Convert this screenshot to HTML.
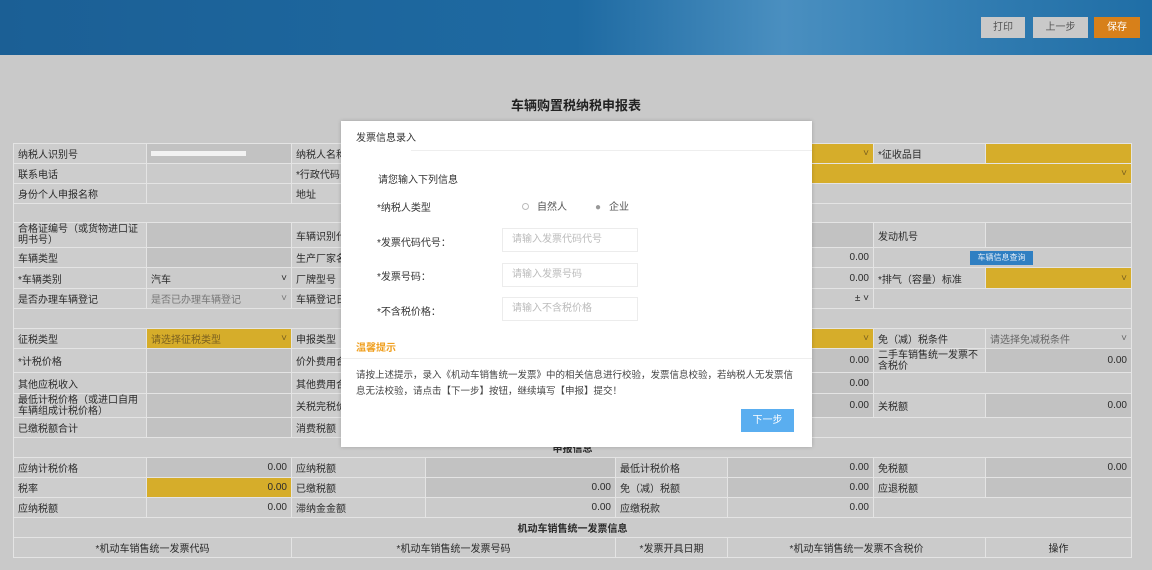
<!DOCTYPE html>
<html><head><meta charset="utf-8"><style>
*{margin:0;padding:0;box-sizing:border-box}
body{width:1152px;height:570px;overflow:hidden;background:#c9c9c9;font-family:"Liberation Sans","Noto Sans CJK SC",sans-serif;font-size:10px;color:#2a2a2a;position:relative}
.hd{position:absolute;left:0;top:0;width:1152px;height:55px;background:linear-gradient(90deg,#1b5f95 0%,#1e6aa2 50%,#4a8fc0 68%,#3a84b8 78%,#2b77ad 90%,#1f6ea6 100%)}
.b{position:absolute;top:17px;height:21px;font-size:10px;text-align:center;line-height:21px}
.c{position:absolute;border:1px solid #e4e4e4;background:#cfcfcf;padding:0 4px;white-space:nowrap;overflow:hidden;display:flex;align-items:center}
.v{background:#c2c2c2;justify-content:flex-end}
.y{background:#d6ad2a;justify-content:flex-end}
.l{background:#cdcdcd}
.e{background:#cbcbcb}
.ctr{justify-content:center}
.m{position:absolute;left:341px;top:121px;width:471px;height:326px;background:#fff;box-shadow:0 0 4px rgba(0,0,0,.2)}
.m div{position:absolute;white-space:nowrap}
.in{border:1px solid #ececec;width:136px;height:24px;color:#bbb;padding-left:9px;line-height:22px}
</style></head><body>
<div class="hd"></div>
<div class="b" style="left:981px;width:44px;background:#c9c9c9;color:#555">打印</div>
<div class="b" style="left:1033px;width:55px;background:#c9c9c9;color:#555">上一步</div>
<div class="b" style="left:1094px;width:46px;background:#d7801a;color:#fff">保存</div>
<div style="position:absolute;left:0;top:95px;width:1152px;text-align:center;font-size:13px;font-weight:bold;color:#222">车辆购置税纳税申报表</div>

<div class="c l" style="left:13px;top:143px;width:134px;height:21px">纳税人识别号</div>
<div class="c v" style="left:146px;top:143px;width:146px;height:21px;justify-content:flex-start"><span style="display:block;width:95px;height:5px;background:#f2f2f2"></span></div>
<div class="c l" style="left:13px;top:163px;width:134px;height:21px">联系电话</div>
<div class="c e" style="left:146px;top:163px;width:146px;height:21px"></div>
<div class="c l" style="left:13px;top:183px;width:134px;height:21px">身份个人申报名称</div>
<div class="c e" style="left:146px;top:183px;width:146px;height:21px"></div>
<div class="c e" style="left:13px;top:203px;width:1119px;height:20px"></div>
<div class="c l" style="left:13px;top:222px;width:134px;height:26px;white-space:normal;line-height:11px">合格证编号（或货物进口证明书号）</div>
<div class="c v" style="left:146px;top:222px;width:146px;height:26px"></div>
<div class="c l" style="left:13px;top:247px;width:134px;height:21px">车辆类型</div>
<div class="c v" style="left:146px;top:247px;width:146px;height:21px"></div>
<div class="c l" style="left:13px;top:267px;width:134px;height:22px">*车辆类别</div>
<div class="c e" style="left:146px;top:267px;width:146px;height:22px;justify-content:space-between"><span>汽车</span><span>˅</span></div>
<div class="c l" style="left:13px;top:288px;width:134px;height:21px">是否办理车辆登记</div>
<div class="c e" style="left:146px;top:288px;width:146px;height:21px;justify-content:space-between;color:#777"><span>是否已办理车辆登记</span><span>˅</span></div>
<div class="c e" style="left:13px;top:308px;width:1119px;height:21px"></div>
<div class="c l" style="left:13px;top:328px;width:134px;height:21px">征税类型</div>
<div class="c y" style="left:146px;top:328px;width:146px;height:21px;justify-content:space-between;color:#7a6020"><span>请选择征税类型</span><span>˅</span></div>
<div class="c l" style="left:13px;top:348px;width:134px;height:25px">*计税价格</div>
<div class="c v" style="left:146px;top:348px;width:146px;height:25px"></div>
<div class="c l" style="left:13px;top:372px;width:134px;height:22px">其他应税收入</div>
<div class="c v" style="left:146px;top:372px;width:146px;height:22px"></div>
<div class="c l" style="left:13px;top:393px;width:134px;height:25px;white-space:normal;line-height:11px">最低计税价格（或进口自用车辆组成计税价格）</div>
<div class="c v" style="left:146px;top:393px;width:146px;height:25px"></div>
<div class="c l" style="left:13px;top:417px;width:134px;height:21px">已缴税额合计</div>
<div class="c v" style="left:146px;top:417px;width:146px;height:21px"></div>
<div class="c l" style="left:291px;top:143px;width:135px;height:21px">纳税人名称</div>
<div class="c l" style="left:291px;top:163px;width:135px;height:21px">*行政代码</div>
<div class="c l" style="left:291px;top:183px;width:135px;height:21px">地址</div>
<div class="c l" style="left:291px;top:222px;width:135px;height:26px">车辆识别代号</div>
<div class="c l" style="left:291px;top:247px;width:135px;height:21px">生产厂家名称</div>
<div class="c l" style="left:291px;top:267px;width:135px;height:22px">厂牌型号</div>
<div class="c l" style="left:291px;top:288px;width:135px;height:21px">车辆登记日期</div>
<div class="c l" style="left:291px;top:328px;width:135px;height:21px">申报类型</div>
<div class="c l" style="left:291px;top:348px;width:135px;height:25px">价外费用合计</div>
<div class="c l" style="left:291px;top:372px;width:135px;height:22px">其他费用合计</div>
<div class="c l" style="left:291px;top:393px;width:135px;height:25px">关税完税价格</div>
<div class="c l" style="left:291px;top:417px;width:135px;height:21px">消费税额</div>

<div class="c y" style="left:727px;top:143px;width:147px;height:21px;color:#7a6020">˅</div>
<div class="c l" style="left:873px;top:143px;width:113px;height:21px">*征收品目</div>
<div class="c y" style="left:985px;top:143px;width:147px;height:21px"></div>
<div class="c y" style="left:727px;top:163px;width:405px;height:21px;color:#7a6020">˅</div>
<div class="c e" style="left:727px;top:183px;width:405px;height:21px"></div>
<div class="c v" style="left:727px;top:222px;width:147px;height:26px"></div>
<div class="c l" style="left:873px;top:222px;width:113px;height:26px">发动机号</div>
<div class="c v" style="left:985px;top:222px;width:147px;height:26px"></div>
<div class="c e" style="left:727px;top:247px;width:147px;height:21px;justify-content:flex-end">0.00</div>
<div class="c e" style="left:873px;top:247px;width:259px;height:21px"></div>
<div style="position:absolute;left:970px;top:251px;width:63px;height:14px;background:#2f7fc2;color:#dfeaf5;font-size:8px;text-align:center;line-height:14px">车辆信息查询</div>
<div class="c e" style="left:727px;top:267px;width:147px;height:22px;justify-content:flex-end">0.00</div>
<div class="c l" style="left:873px;top:267px;width:113px;height:22px">*排气（容量）标准</div>
<div class="c y" style="left:985px;top:267px;width:147px;height:22px;color:#7a6020">˅</div>
<div class="c e" style="left:727px;top:288px;width:147px;height:21px;justify-content:flex-end">± ˅</div>
<div class="c e" style="left:873px;top:288px;width:259px;height:21px"></div>
<div class="c y" style="left:727px;top:328px;width:147px;height:21px;color:#7a6020">˅</div>
<div class="c l" style="left:873px;top:328px;width:113px;height:21px">免（减）税条件</div>
<div class="c e" style="left:985px;top:328px;width:147px;height:21px;justify-content:space-between;color:#666"><span>请选择免减税条件</span><span>˅</span></div>
<div class="c v" style="left:727px;top:348px;width:147px;height:25px">0.00</div>
<div class="c l" style="left:873px;top:348px;width:113px;height:25px;white-space:normal;line-height:11px">二手车销售统一发票不含税价</div>
<div class="c v" style="left:985px;top:348px;width:147px;height:25px">0.00</div>
<div class="c v" style="left:727px;top:372px;width:147px;height:22px">0.00</div>
<div class="c e" style="left:873px;top:372px;width:259px;height:22px"></div>
<div class="c v" style="left:727px;top:393px;width:147px;height:25px">0.00</div>
<div class="c l" style="left:873px;top:393px;width:113px;height:25px">关税额</div>
<div class="c v" style="left:985px;top:393px;width:147px;height:25px">0.00</div>
<div class="c e" style="left:727px;top:417px;width:405px;height:21px"></div>

<div class="c e ctr" style="left:13px;top:437px;width:1119px;height:21px;font-weight:bold">申报信息</div>
<div class="c l" style="left:13px;top:457px;width:134px;height:21px">应纳计税价格</div>
<div class="c v" style="left:146px;top:457px;width:146px;height:21px">0.00</div>
<div class="c l" style="left:291px;top:457px;width:135px;height:21px">应纳税额</div>
<div class="c v" style="left:425px;top:457px;width:191px;height:21px"></div>
<div class="c l" style="left:615px;top:457px;width:113px;height:21px">最低计税价格</div>
<div class="c v" style="left:727px;top:457px;width:147px;height:21px">0.00</div>
<div class="c l" style="left:873px;top:457px;width:113px;height:21px">免税额</div>
<div class="c v" style="left:985px;top:457px;width:147px;height:21px">0.00</div>
<div class="c l" style="left:13px;top:477px;width:134px;height:21px">税率</div>
<div class="c y" style="left:146px;top:477px;width:146px;height:21px">0.00</div>
<div class="c l" style="left:291px;top:477px;width:135px;height:21px">已缴税额</div>
<div class="c v" style="left:425px;top:477px;width:191px;height:21px">0.00</div>
<div class="c l" style="left:615px;top:477px;width:113px;height:21px">免（减）税额</div>
<div class="c v" style="left:727px;top:477px;width:147px;height:21px">0.00</div>
<div class="c l" style="left:873px;top:477px;width:113px;height:21px">应退税额</div>
<div class="c v" style="left:985px;top:477px;width:147px;height:21px"></div>
<div class="c l" style="left:13px;top:497px;width:134px;height:21px">应纳税额</div>
<div class="c e" style="left:146px;top:497px;width:146px;height:21px;justify-content:flex-end">0.00</div>
<div class="c l" style="left:291px;top:497px;width:135px;height:21px">滞纳金金额</div>
<div class="c e" style="left:425px;top:497px;width:191px;height:21px;justify-content:flex-end">0.00</div>
<div class="c l" style="left:615px;top:497px;width:113px;height:21px">应缴税款</div>
<div class="c e" style="left:727px;top:497px;width:147px;height:21px;justify-content:flex-end">0.00</div>
<div class="c e" style="left:873px;top:497px;width:259px;height:21px"></div>
<div class="c e ctr" style="left:13px;top:517px;width:1119px;height:21px;font-weight:bold">机动车销售统一发票信息</div>
<div class="c e ctr" style="left:13px;top:537px;width:279px;height:21px">*机动车销售统一发票代码</div>
<div class="c e ctr" style="left:291px;top:537px;width:325px;height:21px">*机动车销售统一发票号码</div>
<div class="c e ctr" style="left:615px;top:537px;width:113px;height:21px">*发票开具日期</div>
<div class="c e ctr" style="left:727px;top:537px;width:259px;height:21px">*机动车销售统一发票不含税价</div>
<div class="c e ctr" style="left:985px;top:537px;width:147px;height:21px">操作</div>

<div class="m">
<div style="left:15px;top:8px;font-size:10px;color:#333">发票信息录入</div>
<div style="left:70px;top:29px;width:401px;height:1px;background:#eee"></div>
<div style="left:37px;top:50px;color:#333">请您输入下列信息</div>
<div style="left:36px;top:78px;color:#333">*纳税人类型</div>
<div style="left:181px;top:77px;color:#555"><span style="display:inline-block;width:7px;height:7px;border:1px solid #bbb;border-radius:50%;margin-right:8px"></span>自然人</div>
<div style="left:254px;top:77px;color:#555"><span style="color:#999;margin-right:8px">●</span>企业</div>
<div style="left:36px;top:113px;color:#333">*发票代码代号：</div>
<div class="in" style="left:161px;top:107px">请输入发票代码代号</div>
<div style="left:36px;top:147px;color:#333">*发票号码：</div>
<div class="in" style="left:161px;top:142px">请输入发票号码</div>
<div style="left:36px;top:182px;color:#333">*不含税价格：</div>
<div class="in" style="left:161px;top:176px">请输入不含税价格</div>
<div style="left:15px;top:218px;color:#f0a020;font-weight:bold">温馨提示</div>
<div style="left:0;top:237px;width:471px;height:1px;background:#eee"></div>
<div style="left:15px;top:247px;font-size:9.5px;color:#444;width:440px;white-space:normal;line-height:16px">请按上述提示，录入《机动车销售统一发票》中的相关信息进行校验，发票信息校验，若纳税人无发票信息无法校验，请点击【下一步】按钮，继续填写【申报】提交！</div>
<div style="left:400px;top:288px;width:53px;height:23px;background:#5aaef0;color:#fff;text-align:center;line-height:23px">下一步</div>
</div>
</body></html>
